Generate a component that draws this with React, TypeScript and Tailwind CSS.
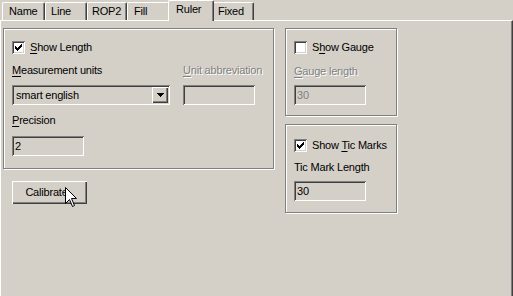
import React from "react";

function Check({ checked }: { checked: boolean }) {
  return (
    <div className="relative h-[13px] w-[13px] shrink-0 bg-white shadow-[inset_1px_1px_0_#808080,inset_-1px_-1px_0_#ffffff,inset_2px_2px_0_#404040,inset_-2px_-2px_0_#d4d0c8]">
      {checked && (
        <svg width="7" height="7" viewBox="0 0 7 7" className="absolute left-[3px] top-[3px]" shapeRendering="crispEdges">
          <rect x="6" y="0" width="1" height="1" fill="#000" />
          <rect x="5" y="1" width="2" height="1" fill="#000" />
          <rect x="0" y="2" width="1" height="1" fill="#000" />
          <rect x="4" y="2" width="3" height="1" fill="#000" />
          <rect x="0" y="3" width="2" height="1" fill="#000" />
          <rect x="3" y="3" width="3" height="1" fill="#000" />
          <rect x="0" y="4" width="5" height="1" fill="#000" />
          <rect x="1" y="5" width="3" height="1" fill="#000" />
          <rect x="2" y="6" width="1" height="1" fill="#000" />
        </svg>
      )}
    </div>
  );
}

function U({ children }: { children: React.ReactNode }) {
  return <span className="underline underline-offset-[2px]">{children}</span>;
}

export default function App() {
  return (
    <div className="relative h-[296px] w-[513px] overflow-hidden bg-[#d4d0c8] font-['Liberation_Sans',Arial,sans-serif] text-[11px] leading-[13px] tracking-[-0.2px] text-black">
      {/* Tabs */}
      <div className="flex h-[20px] items-end pl-[2px]">
        <div className="flex h-[18px] w-[43px] items-start rounded-t-[2px] border-l border-t border-r border-white border-r-[#404040] pl-[6px] pt-[2px] shadow-[inset_-1px_0_0_#808080]">
          Name
        </div>
        <div className="flex h-[18px] w-[42px] items-start rounded-t-[2px] border-l border-t border-r border-white border-r-[#404040] pl-[5px] pt-[2px] shadow-[inset_-1px_0_0_#808080]">
          Line
        </div>
        <div className="flex h-[18px] w-[40px] items-start rounded-t-[2px] border-l border-t border-r border-white border-r-[#404040] pl-[4px] pt-[2px] shadow-[inset_-1px_0_0_#808080]">
          ROP2
        </div>
        <div className="flex h-[18px] w-[43px] items-start rounded-t-[2px] border-l border-t border-r border-white border-r-[#404040] pl-[6px] pt-[2px] shadow-[inset_-1px_0_0_#808080]">
          Fill
        </div>
        <div className="relative z-10 -mb-px -ml-[2px] -mr-[2px] flex h-[21px] w-[46px] items-start rounded-t-[2px] border-l border-t border-r border-white border-r-[#404040] bg-[#d4d0c8] pl-[7px] pt-[2px] shadow-[inset_-1px_0_0_#808080]">
          Ruler
        </div>
        <div className="flex h-[18px] w-[42px] items-start rounded-t-[2px] border-l border-t border-r border-white border-r-[#404040] pl-[5px] pt-[2px] shadow-[inset_-1px_0_0_#808080]">
          Fixed
        </div>
      </div>

      {/* Panel */}
      <div className="relative flex h-[290px] border-l border-t border-r border-white border-r-[#404040] pl-[2px] pt-[7px] shadow-[inset_-1px_0_0_#808080]">
        {/* Left column */}
        <div className="flex w-[271px] flex-col">
          <div className="flex h-[141px] flex-col border border-[#808080] pl-[8px] shadow-[1px_1px_0_#ffffff,inset_1px_1px_0_#ffffff]">
            <div className="mt-[12px] flex h-[13px] items-center gap-[5px]">
              <Check checked />
              <span>
                <U>S</U>how Length
              </span>
            </div>
            <div className="mt-[10px] flex h-[13px]">
              <span className="w-[171px]">
                <U>M</U>easurement units
              </span>
              <span className="text-[#808080] [text-shadow:1px_1px_0_#ffffff]">
                <U>U</U>nit abbreviation
              </span>
            </div>
            <div className="mt-[8px] flex h-[20px] gap-[13px]">
              <div className="flex h-[20px] w-[158px] items-center justify-between pl-[4px] pr-[2px] shadow-[inset_1px_1px_0_#808080,inset_-1px_-1px_0_#ffffff,inset_2px_2px_0_#404040,inset_-2px_-2px_0_#d4d0c8]">
                <span>smart english</span>
                <div className="flex h-[16px] w-[16px] items-center justify-center shadow-[inset_1px_1px_0_#ffffff,inset_-1px_-1px_0_#404040,inset_-2px_-2px_0_#808080]">
                  <svg width="7" height="4" viewBox="0 0 7 4" shapeRendering="crispEdges">
                    <rect x="0" y="0" width="7" height="1" fill="#000" />
                    <rect x="1" y="1" width="5" height="1" fill="#000" />
                    <rect x="2" y="2" width="3" height="1" fill="#000" />
                    <rect x="3" y="3" width="1" height="1" fill="#000" />
                  </svg>
                </div>
              </div>
              <div className="h-[20px] w-[72px] shadow-[inset_1px_1px_0_#808080,inset_-1px_-1px_0_#ffffff,inset_2px_2px_0_#404040,inset_-2px_-2px_0_#d4d0c8]" />
            </div>
            <div className="mt-[9px] h-[13px]">
              <U>P</U>recision
            </div>
            <div className="mt-[9px] flex h-[20px] w-[72px] items-center pl-[3px] shadow-[inset_1px_1px_0_#808080,inset_-1px_-1px_0_#ffffff,inset_2px_2px_0_#404040,inset_-2px_-2px_0_#d4d0c8]">
              2
            </div>
          </div>
          <div className="ml-[9px] mt-[12px] flex h-[23px] w-[75px] items-center justify-center pr-[6px] shadow-[inset_1px_1px_0_#ffffff,inset_-1px_-1px_0_#404040,inset_-2px_-2px_0_#808080]">
            Calibrate
          </div>
        </div>

        {/* Right column */}
        <div className="ml-[11px] flex w-[112px] flex-col gap-[8px]">
          <div className="flex h-[88px] flex-col border border-[#808080] pl-[8px] shadow-[1px_1px_0_#ffffff,inset_1px_1px_0_#ffffff]">
            <div className="mt-[12px] flex h-[13px] items-center gap-[5px]">
              <Check checked={false} />
              <span>
                S<U>h</U>ow Gauge
              </span>
            </div>
            <div className="mt-[11px] h-[13px] text-[#808080] [text-shadow:1px_1px_0_#ffffff]">
              <U>G</U>auge length
            </div>
            <div className="mt-[7px] flex h-[20px] w-[72px] items-center pl-[3px] text-[#808080] shadow-[inset_1px_1px_0_#808080,inset_-1px_-1px_0_#ffffff,inset_2px_2px_0_#404040,inset_-2px_-2px_0_#d4d0c8]">
              30
            </div>
          </div>
          <div className="flex h-[89px] flex-col border border-[#808080] pl-[8px] shadow-[1px_1px_0_#ffffff,inset_1px_1px_0_#ffffff]">
            <div className="mt-[14px] flex h-[13px] items-center gap-[5px]">
              <Check checked />
              <span>
                Show <U>T</U>ic Marks
              </span>
            </div>
            <div className="mt-[9px] h-[13px]">Tic Mark Length</div>
            <div className="mt-[7px] flex h-[20px] w-[72px] items-center pl-[3px] shadow-[inset_1px_1px_0_#808080,inset_-1px_-1px_0_#ffffff,inset_2px_2px_0_#404040,inset_-2px_-2px_0_#d4d0c8]">
              30
            </div>
          </div>
        </div>
      </div>

      {/* Mouse cursor */}
      <svg
        className="absolute left-[65px] top-[187px]"
        width="13"
        height="21"
        viewBox="0 0 13 21"
      >
        <path
          d="M0.5 0.5 L0.5 16.5 L4.5 12.5 L7.5 19.5 L9.5 18.5 L6.5 11.5 L11.5 11.5 Z"
          fill="#ffffff"
          stroke="#000000"
          strokeWidth="1"
          strokeLinejoin="miter"
        />
      </svg>
    </div>
  );
}
